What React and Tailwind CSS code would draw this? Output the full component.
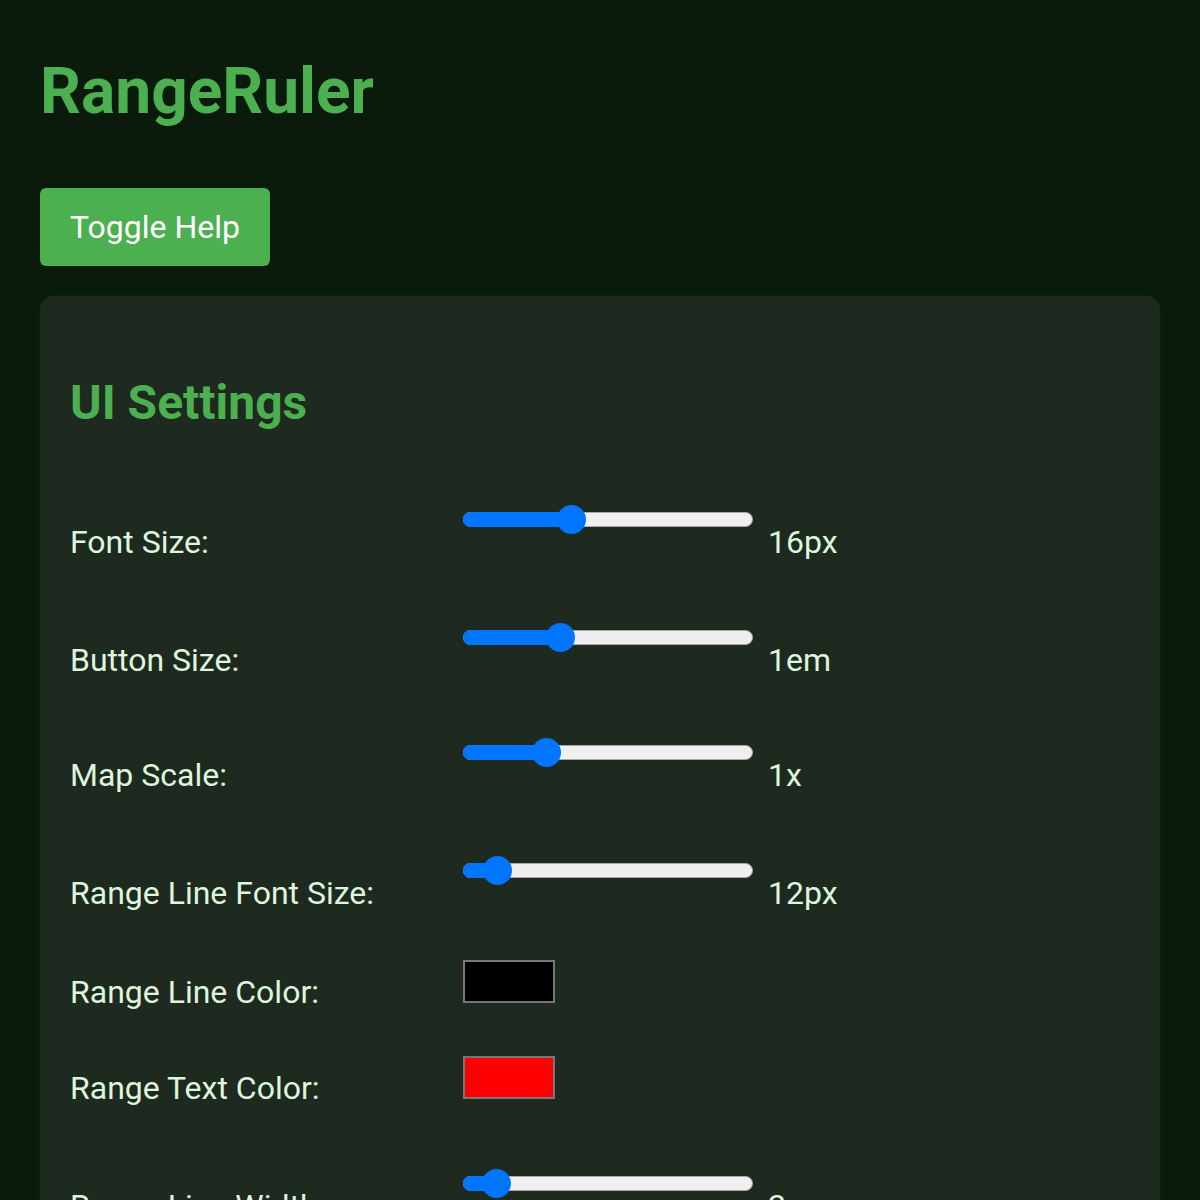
import React from "react";

function Slider({ pos }) {
  return (
    <div className="relative flex items-center w-[290px] h-[29px] shrink-0">
      <div className="relative w-full h-[15px]">
        <div className="absolute inset-0 rounded-full bg-[#efefef] border border-[#a8a8a8]" />
        <div
          className="absolute left-0 top-0 bottom-0 rounded-l-full bg-[#0075ff]"
          style={{ width: pos }}
        />
      </div>
      <div
        className="absolute top-0 w-[29px] h-[29px] rounded-full bg-[#0075ff]"
        style={{ left: pos - 14.5 }}
      />
    </div>
  );
}

function SliderRow({ label, pos, value, h }) {
  return (
    <div className={"flex items-start " + h}>
      <span className="w-[393px] shrink-0 mt-[19px]">{label}</span>
      <Slider pos={pos} />
      <span className="ml-[15px] mt-[19px]">{value}</span>
    </div>
  );
}

function ColorRow({ label, color, h }) {
  return (
    <div className={"flex items-start " + h}>
      <span className="w-[393px] shrink-0 mt-[14px]">{label}</span>
      <div className={"w-[92px] h-[43px] border-2 border-[#777777] shrink-0 " + color} />
    </div>
  );
}

export default function App() {
  return (
    <div className="min-h-[1200px] bg-[#0a1a0b] pt-[54px] px-[40px] pb-[40px] font-['Roboto',sans-serif]">
      <h1 className="text-[64px] leading-[75px] font-bold text-[#4caf50]">RangeRuler</h1>
      <button className="mt-[59px] bg-[#4caf50] text-white text-[32px] leading-[38px] px-[30px] py-[20px] rounded-[6px]">
        Toggle Help
      </button>
      <div className="mt-[30px] bg-[#1e2a1f] rounded-[14px] shadow-[0_0_10px_rgba(76,175,80,0.08)] pt-[79px] px-[30px] pb-[40px] text-[#def5de] text-[32px] leading-[37px]">
        <h2 className="text-[48px] leading-[56px] font-bold text-[#4caf50]">UI Settings</h2>
        <div className="flex flex-col mt-[74px]">
          <SliderRow label="Font Size:" pos={108.5} value="16px" h="h-[118px]" />
          <SliderRow label="Button Size:" pos={97} value="1em" h="h-[115px]" />
          <SliderRow label="Map Scale:" pos={83.5} value="1x" h="h-[118px]" />
          <SliderRow label="Range Line Font Size:" pos={34.3} value="12px" h="h-[104px]" />
          <ColorRow label="Range Line Color:" color="bg-black" h="h-[96px]" />
          <ColorRow label="Range Text Color:" color="bg-[#ff0000]" h="h-[113px]" />
          <SliderRow label="Range Line Width:" pos={33.5} value="2px" h="h-[118px]" />
          <SliderRow label="Range Line Opacity:" pos={261} value="1" h="h-[118px]" />
        </div>
      </div>
    </div>
  );
}
